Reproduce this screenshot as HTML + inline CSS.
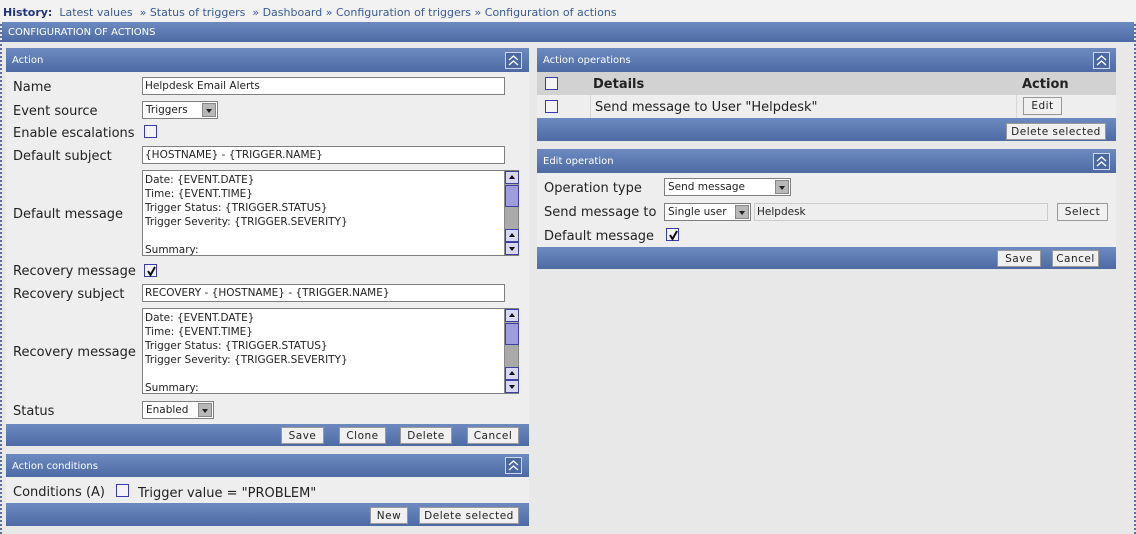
<!DOCTYPE html>
<html><head><style>
*{margin:0;padding:0;box-sizing:border-box}
body{width:1136px;height:534px;background:#e8e8e8;font-family:"DejaVu Sans","Liberation Sans",sans-serif;position:relative;overflow:hidden;color:#222}
.a{position:absolute}
.edge{border-left:2px dotted #5a6fa0;border-right:2px dotted #5a6fa0}
.hist{left:0;top:0;width:1136px;height:22px;background:#f2f2f2;font-size:11px;color:#3b5a96;padding:6px 3px 0;white-space:nowrap}
.hist b{color:#22357a}
.bar{background:linear-gradient(#6d8ac0,#4d6aa5);color:#fff;font-size:10px;padding-left:6px;line-height:25px}
.body{background:#eeeeee}
.lbl{font-size:13px;color:#222}
.in{background:#fff;border:1px solid #7f7f7f;font-size:10.5px;padding-left:2px;line-height:17px;white-space:nowrap}
.sel{background:#fff;border:1px solid #7f7f7f;font-size:10.5px;padding-left:3px;line-height:17px}
.sel i{position:absolute;right:1px;top:1px;width:14px;height:14px;background:#b8b8b8;border:1px solid #888}
.sel i:after{content:"";position:absolute;left:3px;top:5px;border:3px solid transparent;border-top:4px solid #222}
.btn{background:#f0f0f0;border:1px solid #999;font-size:10.5px;text-align:center;line-height:17px;letter-spacing:.5px}
.cb{width:13px;height:13px;border:1px solid #3a3ab0;background:#f4f4f4}
.cb svg{position:absolute;left:1px;top:1px}
.col{width:17px;height:17px;border:1px solid #cfd8ea;background:#4c68a3}
.col svg{position:absolute;left:2px;top:2px}
.ta{background:#fff;border:1px solid #7f7f7f;font-size:10.5px;line-height:14px;padding:2px 2px}
.sb{background:#aaa;border-left:1px solid #888}
.sa{width:14px;height:13px;background:#d8d8f4;border:1px solid #4040a0;left:0}
.sa:after{content:"";position:absolute;left:3px;top:3px;border:3px solid transparent;border-bottom:4px solid #111;border-top:0}
.sd:after{border-top:4px solid #111;border-bottom:0;top:4px}
</style></head><body>
<div class="a edge" style="left:0;top:0;width:1136px;height:534px"></div>
<div class="a hist"><b>History:</b>&nbsp; Latest values &nbsp;» Status of triggers &nbsp;» Dashboard » Configuration of triggers » Configuration of actions</div>
<div class="a bar" style="left:2px;top:22px;width:1132px;height:20px;line-height:21px;font-size:10px">CONFIGURATION OF ACTIONS</div>

<!-- Action panel -->
<div class="a bar" style="left:6px;top:48px;width:523px;height:24px">Action</div>
<div class="a col" style="left:505px;top:52px"><svg width="11" height="11" viewBox="0 0 11 11" fill="none" stroke="#fff" stroke-width="1.3"><path d="M1 5 L5.5 1 L10 5 M1 10 L5.5 6 L10 10"/></svg></div>
<div class="a body" style="left:6px;top:72px;width:523px;height:352px"></div>
<div class="a lbl" style="left:13px;top:80px">Name</div>
<div class="a in" style="left:142px;top:77px;width:363px;height:18px">Helpdesk Email Alerts</div>
<div class="a lbl" style="left:13px;top:104px">Event source</div>
<div class="a sel" style="left:142px;top:101px;width:76px;height:18px">Triggers<i></i></div>
<div class="a lbl" style="left:13px;top:126px">Enable escalations</div>
<div class="a cb" style="left:144px;top:125px"></div>
<div class="a lbl" style="left:13px;top:149px">Default subject</div>
<div class="a in" style="left:142px;top:146px;width:363px;height:18px">{HOSTNAME} - {TRIGGER.NAME}</div>
<div class="a lbl" style="left:13px;top:207px">Default message</div>
<div class="a ta" style="left:142px;top:170px;width:377px;height:86px">Date: {EVENT.DATE}<br>Time: {EVENT.TIME}<br>Trigger Status: {TRIGGER.STATUS}<br>Trigger Severity: {TRIGGER.SEVERITY}<br><br>Summary:</div>
<div class="a sb" style="left:504px;top:171px;width:14px;height:84px"><div class="a sa" style="top:0"></div><div class="a" style="left:0;top:14px;width:14px;height:22px;background:#9d9de0;border:1px solid #4040a0"></div><div class="a sa" style="top:58px"></div><div class="a sa sd" style="top:71px"></div></div>
<div class="a lbl" style="left:13px;top:264px">Recovery message</div>
<div class="a cb" style="left:144px;top:264px"><svg width="11" height="11" viewBox="0 0 11 11" fill="none" stroke="#111" stroke-width="2"><path d="M2 5 L4.5 9 L9 1"/></svg></div>
<div class="a lbl" style="left:13px;top:287px">Recovery subject</div>
<div class="a in" style="left:142px;top:284px;width:363px;height:18px">RECOVERY - {HOSTNAME} - {TRIGGER.NAME}</div>
<div class="a lbl" style="left:13px;top:345px">Recovery message</div>
<div class="a ta" style="left:142px;top:308px;width:377px;height:86px">Date: {EVENT.DATE}<br>Time: {EVENT.TIME}<br>Trigger Status: {TRIGGER.STATUS}<br>Trigger Severity: {TRIGGER.SEVERITY}<br><br>Summary:</div>
<div class="a sb" style="left:504px;top:309px;width:14px;height:84px"><div class="a sa" style="top:0"></div><div class="a" style="left:0;top:14px;width:14px;height:22px;background:#9d9de0;border:1px solid #4040a0"></div><div class="a sa" style="top:58px"></div><div class="a sa sd" style="top:71px"></div></div>
<div class="a lbl" style="left:13px;top:404px">Status</div>
<div class="a sel" style="left:142px;top:401px;width:72px;height:18px">Enabled<i></i></div>
<div class="a bar" style="left:6px;top:424px;width:523px;height:22px"></div>
<div class="a btn" style="left:281px;top:427px;width:43px;height:17px">Save</div>
<div class="a btn" style="left:339px;top:427px;width:47px;height:17px">Clone</div>
<div class="a btn" style="left:400px;top:427px;width:52px;height:17px">Delete</div>
<div class="a btn" style="left:467px;top:427px;width:52px;height:17px">Cancel</div>

<!-- Action conditions -->
<div class="a bar" style="left:6px;top:454px;width:523px;height:23px">Action conditions</div>
<div class="a col" style="left:505px;top:457px"><svg width="11" height="11" viewBox="0 0 11 11" fill="none" stroke="#fff" stroke-width="1.3"><path d="M1 5 L5.5 1 L10 5 M1 10 L5.5 6 L10 10"/></svg></div>
<div class="a body" style="left:6px;top:477px;width:523px;height:26px"></div>
<div class="a lbl" style="left:13px;top:485px">Conditions (A)</div>
<div class="a cb" style="left:116px;top:484px"></div>
<div class="a lbl" style="left:138px;top:486px">Trigger value = "PROBLEM"</div>
<div class="a bar" style="left:6px;top:503px;width:523px;height:23px"></div>
<div class="a btn" style="left:370px;top:507px;width:38px;height:17px">New</div>
<div class="a btn" style="left:419px;top:507px;width:100px;height:17px">Delete selected</div>

<!-- Action operations -->
<div class="a bar" style="left:537px;top:48px;width:579px;height:24px">Action operations</div>
<div class="a col" style="left:1093px;top:52px"><svg width="11" height="11" viewBox="0 0 11 11" fill="none" stroke="#fff" stroke-width="1.3"><path d="M1 5 L5.5 1 L10 5 M1 10 L5.5 6 L10 10"/></svg></div>
<div class="a" style="left:537px;top:72px;width:579px;height:23px;background:#d2d2d2"></div>
<div class="a cb" style="left:545px;top:77px"></div>
<div class="a" style="left:593px;top:77px;font-size:13px;font-weight:bold">Details</div>
<div class="a" style="left:1022px;top:77px;font-size:13px;font-weight:bold">Action</div>
<div class="a body" style="left:537px;top:95px;width:579px;height:23px"></div>
<div class="a" style="left:590px;top:95px;width:1px;height:23px;background:#d6d6d6"></div>
<div class="a" style="left:1016px;top:95px;width:1px;height:23px;background:#d6d6d6"></div>
<div class="a cb" style="left:545px;top:100px"></div>
<div class="a lbl" style="left:595px;top:100px">Send message to User "Helpdesk"</div>
<div class="a btn" style="left:1023px;top:97px;width:39px;height:18px">Edit</div>
<div class="a bar" style="left:537px;top:118px;width:579px;height:23px"></div>
<div class="a btn" style="left:1006px;top:123px;width:100px;height:17px">Delete selected</div>

<!-- Edit operation -->
<div class="a bar" style="left:537px;top:149px;width:579px;height:24px">Edit operation</div>
<div class="a col" style="left:1093px;top:153px"><svg width="11" height="11" viewBox="0 0 11 11" fill="none" stroke="#fff" stroke-width="1.3"><path d="M1 5 L5.5 1 L10 5 M1 10 L5.5 6 L10 10"/></svg></div>
<div class="a body" style="left:537px;top:173px;width:579px;height:74px"></div>
<div class="a lbl" style="left:544px;top:181px">Operation type</div>
<div class="a sel" style="left:664px;top:178px;width:127px;height:18px">Send message<i></i></div>
<div class="a lbl" style="left:544px;top:205px">Send message to</div>
<div class="a sel" style="left:664px;top:203px;width:87px;height:18px">Single user<i></i></div>
<div class="a in" style="left:754px;top:203px;width:294px;height:18px;background:#eee;border-color:#ccc">Helpdesk</div>
<div class="a btn" style="left:1057px;top:203px;width:51px;height:18px">Select</div>
<div class="a lbl" style="left:544px;top:229px">Default message</div>
<div class="a cb" style="left:666px;top:228px"><svg width="11" height="11" viewBox="0 0 11 11" fill="none" stroke="#111" stroke-width="2"><path d="M2 5 L4.5 9 L9 1"/></svg></div>
<div class="a bar" style="left:537px;top:247px;width:579px;height:22px"></div>
<div class="a btn" style="left:997px;top:250px;width:44px;height:17px">Save</div>
<div class="a btn" style="left:1052px;top:250px;width:47px;height:17px">Cancel</div>
</body></html>
